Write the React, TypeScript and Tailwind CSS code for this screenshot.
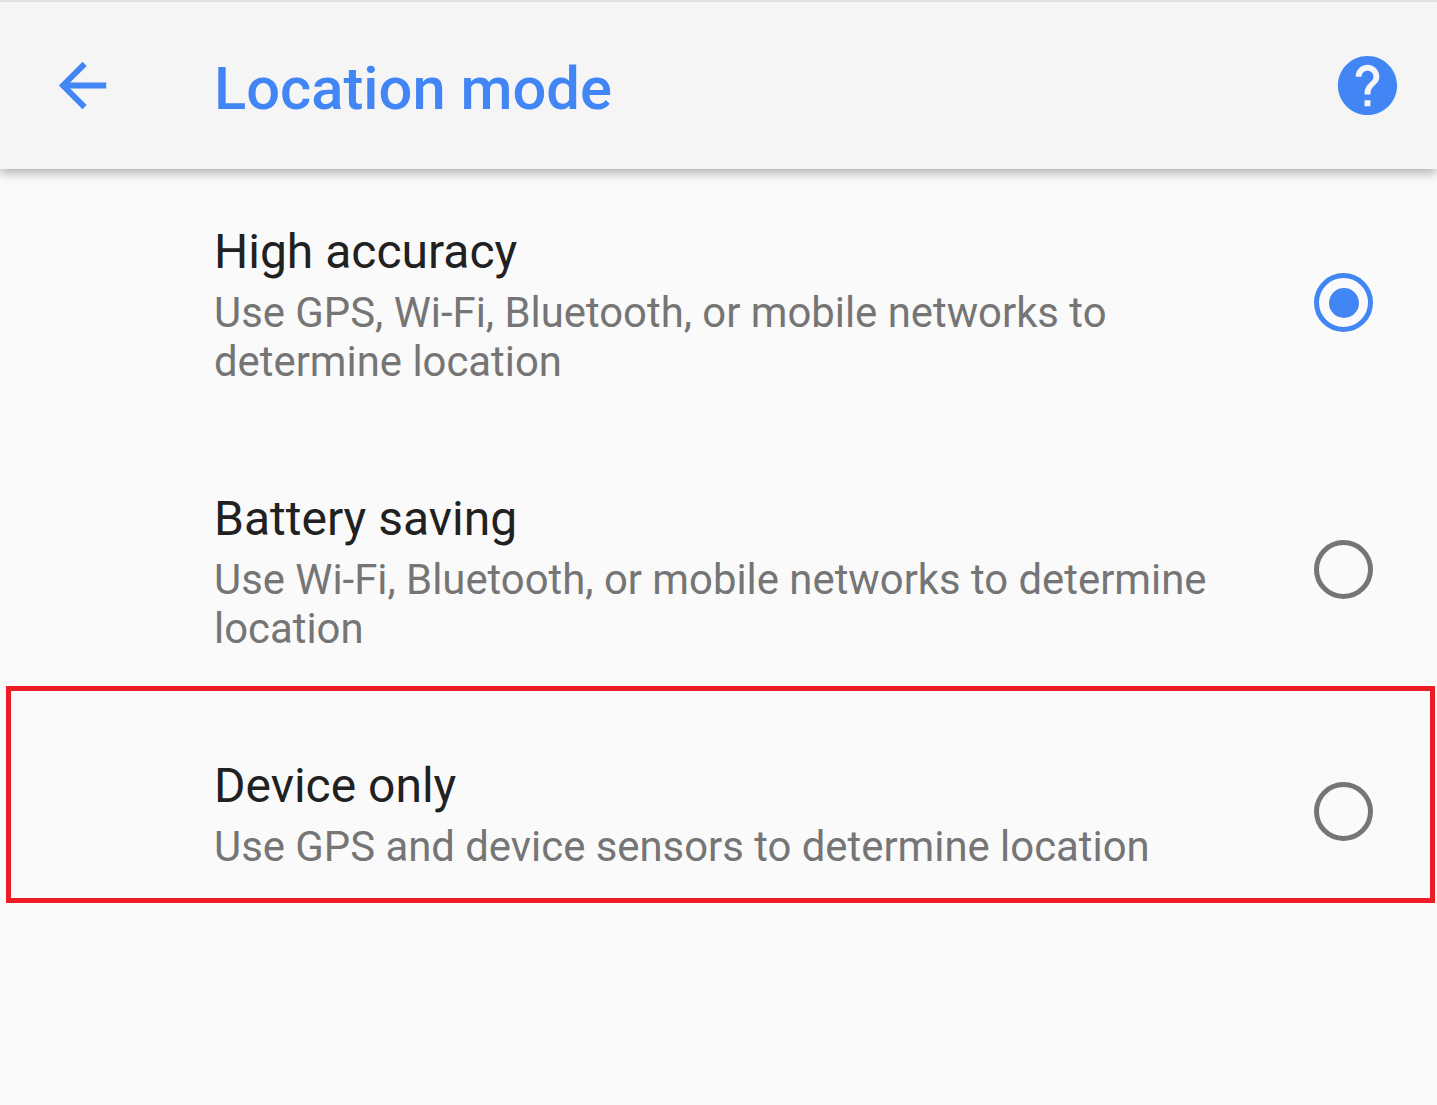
const options = [
  {
    title: "High accuracy",
    lines: ["Use GPS, Wi-Fi, Bluetooth, or mobile networks to", "determine location"],
    selected: true,
    height: "h-[267px]",
  },
  {
    title: "Battery saving",
    lines: ["Use Wi-Fi, Bluetooth, or mobile networks to determine", "location"],
    selected: false,
    height: "h-[267px]",
  },
  {
    title: "Device only",
    lines: ["Use GPS and device sensors to determine location"],
    selected: false,
    height: "h-[218px]",
  },
];

const Radio = ({ selected, nudge }: { selected: boolean; nudge: boolean }) => (
  <div
    className={`flex h-[59px] w-[59px] items-center justify-center rounded-full border-[5px] ${
      selected ? "border-[#4285f4]" : "border-[#757575]"
    } ${nudge ? "mb-[1px]" : ""}`}
  >
    {selected && <div className="h-[30px] w-[30px] rounded-full bg-[#4285f4]" />}
  </div>
);

const App = () => {
  return (
    <div className="flex h-[1105px] w-[1437px] flex-col overflow-hidden bg-[#fafafa] font-['Roboto',sans-serif]">
      <header className="z-10 flex h-[169px] shrink-0 items-center border-t-2 border-[#e0e0e0] bg-[#f5f5f5] shadow-[0_4px_10px_rgba(0,0,0,0.3)]">
        <div className="flex w-[214px] shrink-0 pl-[47px]">
          <svg viewBox="0 0 24 24" className="h-[71px] w-[71px] fill-[#4285f4]">
            <path d="M20 11H7.83l5.59-5.59L12 4l-8 8 8 8 1.41-1.41L7.83 13H20v-2z" />
          </svg>
        </div>
        <h1 className="flex-1 pt-[8px] text-[59.7px] font-medium leading-none text-[#4285f4]">Location mode</h1>
        <svg viewBox="0 0 24 24" className="mr-[34px] h-[71px] w-[71px] fill-[#4285f4]">
          <path d="M12 2C6.48 2 2 6.48 2 12s4.48 10 10 10 10-4.48 10-10S17.52 2 12 2zm1 17h-2v-2h2v2zm2.07-7.75l-.9.92C13.45 12.9 13 13.5 13 15h-2v-.5c0-1.1.45-2.1 1.17-2.83l1.24-1.26c.37-.36.59-.86.59-1.41 0-1.1-.9-2-2-2s-2 .9-2 2H8c0-2.21 1.79-4 4-4s4 1.79 4 4c0 .88-.36 1.68-.93 2.25z" />
        </svg>
      </header>

      <main className="flex flex-col">
        {options.map((o) => (
          <div key={o.title} className={`relative flex items-center justify-between pl-[214px] pr-[64px] ${o.height}`}>
            <div className="pt-[2px]">
              <div className="mb-[6px] text-[48px] leading-[60px] text-[#212121]">{o.title}</div>
              {o.lines.map((l) => (
                <div key={l} className="text-[41.85px] leading-[49px] text-[#757575]">
                  {l}
                </div>
              ))}
            </div>
            <Radio selected={o.selected} nudge={o.title === "Device only"} />
            {o.title === "Device only" && (
              <div className="absolute -top-[17px] left-[6px] h-[217px] w-[1429px] border-[5px] border-[#ee1c25]" />
            )}
          </div>
        ))}
      </main>
    </div>
  );
};

export default App;
